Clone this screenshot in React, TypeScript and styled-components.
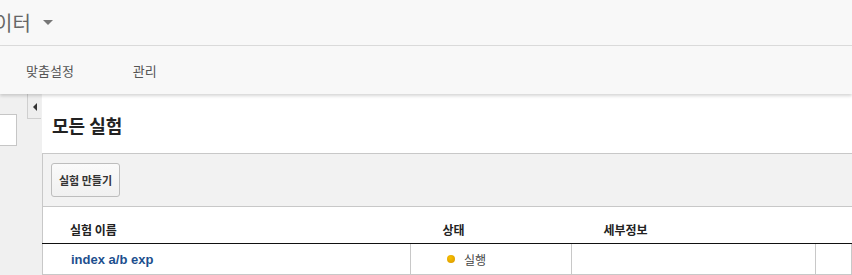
import React from "react";
import styled, { createGlobalStyle } from "styled-components";

const GlobalStyle = createGlobalStyle`
    html, body {
        margin: 0;
        padding: 0;
        background: #ffffff;
        font-family: "Liberation Sans", "Noto Sans CJK KR", sans-serif;
        overflow: hidden;
    }
`;

const SPage = styled.div`
    width: 852px;
    height: 275px;
    display: flex;
    flex-direction: column;
    overflow: hidden;

    & > * {
        flex-shrink: 0;
    }
`;

const STopBar = styled.div`
    height: 45px;
    display: flex;
    align-items: center;
    background: #f8f8f8;
    border-bottom: 1px solid #dcdcdc;
`;

const SBrand = styled.div`
    display: flex;
    align-items: center;
    margin-left: -6px;
    font-size: 20px;
    color: #666;
    font-family: "Noto Sans CJK KR", sans-serif;
`;

const SCaret = styled.span`
    margin-left: 12px;
    width: 0;
    height: 0;
    border-left: 5px solid transparent;
    border-right: 5px solid transparent;
    border-top: 5px solid #777;
`;

const SNavBar = styled.div`
    height: 48px;
    display: flex;
    align-items: center;
    gap: 59px;
    padding-left: 26px;
    background: #f8f8f8;
    box-shadow: 0 2px 3px rgba(0, 0, 0, 0.16);
    position: relative;
    z-index: 1;
`;

const SNavItem = styled.div`
    font-size: 13px;
    color: #555;
    font-family: "Noto Sans CJK KR", sans-serif;
`;

const SBody = styled.div`
    flex: 1;
    display: flex;
`;

const SSidebar = styled.div`
    width: 42px;
    flex-shrink: 0;
    display: flex;
    gap: 10px;
    background: #f0f0f0;
`;

const SSearchBox = styled.div`
    margin-top: 20px;
    margin-left: -10px;
    width: 25px;
    height: 30px;
    background: #fff;
    border: 1px solid #c6c6c6;
`;

const SToggle = styled.div`
    width: 14px;
    height: 25px;
    display: flex;
    justify-content: center;
    padding-top: 9px;
    box-sizing: border-box;
    background: #eeeeee;
    border-left: 1px solid #cfcfcf;
    border-bottom: 1px solid #cfcfcf;
`;

const SToggleArrow = styled.span`
    width: 0;
    height: 0;
    border-top: 4px solid transparent;
    border-bottom: 4px solid transparent;
    border-right: 4px solid #333;
`;

const SMain = styled.div`
    flex: 1;
    display: flex;
    flex-direction: column;
    background: #fff;
`;

const STitle = styled.h1`
    margin: 0;
    height: 59px;
    display: flex;
    align-items: center;
    padding: 2px 0 0 10px;
    box-sizing: border-box;
    font-size: 18px;
    font-weight: 700;
    color: #222;
    font-family: "Noto Sans CJK KR", sans-serif;
`;

const SToolbar = styled.div`
    height: 52px;
    display: flex;
    align-items: center;
    padding-left: 8px;
    background: #f2f2f2;
    border-top: 1px solid #c8c8c8;
    border-left: 1px solid #c8c8c8;
`;

const SButton = styled.button`
    height: 34px;
    padding: 0 7px;
    border: 1px solid #bdbdbd;
    border-radius: 3px;
    background: linear-gradient(#fafafa, #f0f0f0);
    font-size: 11px;
    font-weight: 700;
    color: #333;
    font-family: "Noto Sans CJK KR", sans-serif;
`;

const STable = styled.table`
    border-collapse: collapse;
    table-layout: fixed;
    width: 100%;
    border-top: 1px solid #c8c8c8;
    border-left: 1px solid #c8c8c8;
`;

const STh = styled.th<{ $w?: number; $pad: number }>`
    box-sizing: border-box;
    width: ${(p) => (p.$w ? `${p.$w}px` : "auto")};
    height: 37px;
    padding: 8px 0 0 ${(p) => p.$pad}px;
    text-align: left;
    font-size: 12px;
    font-weight: 700;
    color: #222;
    border-bottom: 1px solid #111;
    font-family: "Noto Sans CJK KR", sans-serif;
`;

const STd = styled.td<{ $pad: number }>`
    box-sizing: border-box;
    height: 31px;
    padding: 0 0 0 ${(p) => p.$pad}px;
    font-size: 12px;
    color: #333;
    border-right: 1px solid #c8c8c8;
    border-bottom: 1px solid #c8c8c8;
`;

const SLink = styled.a`
    font-size: 13px;
    font-weight: 700;
    color: #1d4f8e;
    text-decoration: none;
    font-family: "Liberation Sans", sans-serif;
`;

const SStatus = styled.div`
    display: flex;
    align-items: center;
    gap: 9px;
    font-family: "Noto Sans CJK KR", sans-serif;
    font-size: 12px;
    color: #444;
`;

const SDot = styled.span`
    width: 8px;
    height: 8px;
    border-radius: 50%;
    background: radial-gradient(circle at 40% 35%, #f7c000, #d99600);
`;

const App = () => {
    return (
        <SPage>
            <GlobalStyle />
            <STopBar>
                <SBrand>
                    이터
                    <SCaret />
                </SBrand>
            </STopBar>
            <SNavBar>
                <SNavItem>맞춤설정</SNavItem>
                <SNavItem>관리</SNavItem>
            </SNavBar>
            <SBody>
                <SSidebar>
                    <SSearchBox />
                    <SToggle>
                        <SToggleArrow />
                    </SToggle>
                </SSidebar>
                <SMain>
                    <STitle>모든 실험</STitle>
                    <SToolbar>
                        <SButton>실험 만들기</SButton>
                    </SToolbar>
                    <STable>
                        <thead>
                            <tr>
                                <STh $w={368} $pad={27}>실험 이름</STh>
                                <STh $w={161} $pad={32}>상태</STh>
                                <STh $w={244} $pad={32}>세부정보</STh>
                                <STh $pad={32}></STh>
                            </tr>
                        </thead>
                        <tbody>
                            <tr>
                                <STd $pad={28}>
                                    <SLink href="#">index a/b exp</SLink>
                                </STd>
                                <STd $pad={36}>
                                    <SStatus>
                                        <SDot />
                                        실행
                                    </SStatus>
                                </STd>
                                <STd $pad={32}></STd>
                                <STd $pad={32}></STd>
                            </tr>
                        </tbody>
                    </STable>
                </SMain>
            </SBody>
        </SPage>
    );
};

export default App;
